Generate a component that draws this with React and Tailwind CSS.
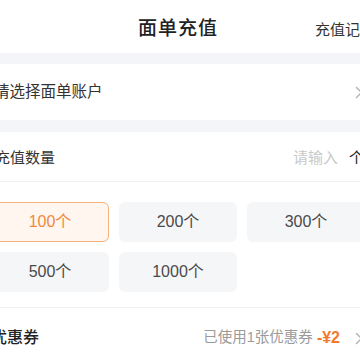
import React from "react";

const Chevron = ({ className = "" }) => (
  <svg width="8" height="13" viewBox="0 0 8 13" fill="none" className={className}>
    <path d="M1.5 1.5 L6.5 6.5 L1.5 11.5" stroke="#b5b5b5" strokeWidth="1.5" strokeLinecap="round" strokeLinejoin="round" />
  </svg>
);

export default function App() {
  const opts = ["100个", "200个", "300个", "500个", "1000个"];
  return (
    <div
      className="w-[360px] h-[360px] overflow-hidden bg-white"
      style={{ fontFamily: '"Liberation Sans","Noto Sans CJK SC",sans-serif' }}
    >
      <div className="w-[398px] -ml-[21px] flex flex-col">
        {/* header */}
        <div className="h-[53px] grid grid-cols-[1fr_auto_1fr] items-center pt-[6px]">
          <div />
          <div className="text-[19px] font-medium text-[#222] tracking-[1px]">面单充值</div>
          <div className="flex justify-end pr-[2px] text-[15px] text-[#333] pt-[2px]">充值记录</div>
        </div>
        <div className="h-[11px] bg-[#f4f5f8]" />
        {/* account */}
        <div className="h-[56px] flex items-center justify-between pl-[15px] pr-[14px]">
          <span className="text-[15.5px] text-[#333]">请选择面单账户</span>
          <Chevron />
        </div>
        <div className="h-[12px] bg-[#f4f5f8]" />
        {/* quantity */}
        <div className="px-[12px]">
          <div className="h-[50px] flex items-center justify-between pl-[4px] pt-[4px] border-b border-[#f2f2f4]">
            <span className="text-[15px] text-[#333]">充值数量</span>
            <div className="flex items-center gap-[11px] pr-[1px]">
              <span className="text-[15px] text-[#c9c9c9]">请输入</span>
              <span className="text-[15px] text-[#222]">个</span>
            </div>
          </div>
          <div className="grid grid-cols-3 gap-[10px] pt-[20px] pb-[15px] border-b border-[#f2f2f4]">
            {opts.map((o, i) => (
              <div
                key={o}
                className={
                  i === 0
                    ? "h-[40px] rounded-[6px] border border-[#f5b37f] bg-[#fff6ef] flex items-center justify-center text-[16px] text-[#f08a3e]"
                    : "h-[40px] rounded-[6px] bg-[#f5f6f8] flex items-center justify-center text-[16px] text-[#4a4a4a]"
                }
              >
                {o}
              </div>
            ))}
          </div>
          <div className="h-[52px] flex items-center justify-between pt-[8px]">
            <span className="text-[16px] font-medium text-[#222]">优惠券</span>
            <div className="flex items-center">
              <span className="text-[14.5px] text-[#9a9a9a]">已使用1张优惠券</span>
              <span className="text-[16px] font-bold text-[#f27a2e] ml-[4px]">-¥2</span>
              <Chevron className="ml-[15px] mr-[2px]" />
            </div>
          </div>
        </div>
      </div>
    </div>
  );
}
